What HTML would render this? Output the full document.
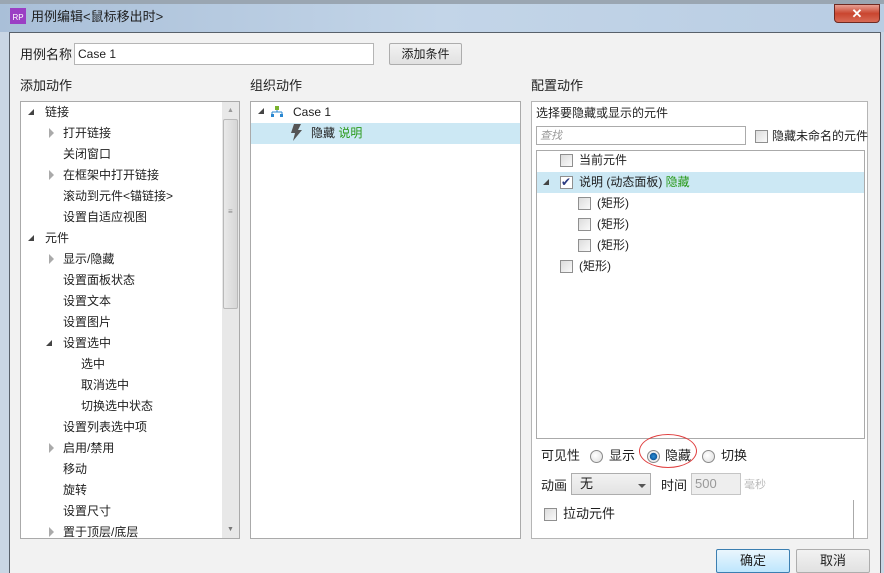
<!DOCTYPE html>
<html><head><meta charset="utf-8"><style>
*{margin:0;padding:0;box-sizing:border-box}
body{width:884px;height:573px;overflow:hidden;background:#c9d6e4;font-family:"Liberation Sans","Noto Sans CJK SC",sans-serif;font-size:12px;color:#1e1e1e;position:relative}
.a{position:absolute;white-space:nowrap;line-height:16px}
.box{position:absolute;background:#fff;border:1px solid #aaa}
.cb{position:absolute;width:13px;height:13px;border:1px solid #8f8f8f;background:linear-gradient(135deg,#dcdcdc,#fafafa)}
.tri{position:absolute;width:0;height:0}
.rad{position:absolute;width:13px;height:13px;border-radius:50%;border:1px solid #8a8a8a;background:radial-gradient(circle at 40% 40%,#fff,#ddd)}
.btn{position:absolute;border:1px solid #adadad;background:linear-gradient(#f2f2f2,#e1e1e1);text-align:center;border-radius:2px}
</style></head><body>
<div class="a" style="left:0;top:0;width:884px;height:32px;background:linear-gradient(90deg,#a9bfd8,#c3d5e8 50%,#b9cde3)"></div>
<div class="a" style="left:0;top:0;width:884px;height:4px;background:#9aa6b2"></div>
<div class="a" style="left:10px;top:8px;width:16px;height:16px;background:#9b3fc4;color:#fff;font-size:8px;line-height:20px;text-align:center">RP</div>
<div class="a" style="left:31px;top:9px;font-size:13px">用例编辑&lt;鼠标移出时&gt;</div>
<div class="a" style="left:834px;top:4px;width:46px;height:19px;border-radius:0 0 4px 4px;background:linear-gradient(#e8a093,#c9452f 50%,#d86a55);border:1px solid #6e2a22;color:#fff;font-weight:bold;text-align:center;font-size:13px;line-height:17px">✕</div>
<div class="a" style="left:9px;top:32px;width:872px;height:541px;background:#f2f2f2;border:1px solid #58616b;border-bottom:none"></div>
<div class="a" style="left:20px;top:47px;font-size:13px">用例名称</div>
<div class="a" style="left:74px;top:43px;width:300px;height:22px;background:#fff;border:1px solid #b5b5b5;padding:2px 3px;font-size:12px">Case 1</div>
<div class="btn" style="left:389px;top:43px;width:73px;height:22px;line-height:20px">添加条件</div>
<div class="a" style="left:20px;top:78px;font-size:13px">添加动作</div>
<div class="a" style="left:250px;top:78px;font-size:13px">组织动作</div>
<div class="a" style="left:531px;top:78px;font-size:13px">配置动作</div>

<div class="box" style="left:20px;top:101px;width:220px;height:438px"></div>
<div class="a" style="left:222px;top:102px;width:17px;height:436px;background:#e8e8e8"></div>
<div class="a" style="left:223px;top:119px;width:15px;height:190px;background:linear-gradient(90deg,#e9e9e9,#d6d6d6);border:1px solid #b9b9b9;border-radius:2px"></div>
<div class="a" style="left:227px;top:103px;color:#999;font-size:7px">▲</div>
<div class="a" style="left:227px;top:522px;color:#777;font-size:7px">▼</div>
<div class="a" style="left:228px;top:204px;color:#888;font-size:8px">≡</div>
<div id="L"></div>

<div class="box" style="left:250px;top:101px;width:271px;height:438px"></div>
<div class="a" style="left:251px;top:123px;width:269px;height:21px;background:#cce8f4"></div>
<div class="tri" style="left:258px;top:108px;border-left:6px solid transparent;border-bottom:6px solid #444"></div>
<svg class="a" style="left:271px;top:106px" width="12" height="12"><rect x="4" y="0" width="4" height="4" fill="#7ab32e"/><path d="M6 4V6M1 6H11M1 6V8M11 6V8" stroke="#2a87d0" fill="none"/><rect x="0" y="8" width="3" height="3" fill="#2a87d0"/><rect x="9" y="8" width="3" height="3" fill="#2a87d0"/></svg>
<div class="a" style="left:293px;top:104px">Case 1</div>
<svg class="a" style="left:290px;top:124px" width="13" height="17"><path d="M4 0H11L8 6H12L3 17L5 9H1Z" fill="#555"/></svg>
<div class="a" style="left:311px;top:125px">隐藏 <span style="color:#2a9a1a">说明</span></div>

<div class="a" style="left:531px;top:101px;width:337px;height:438px;background:#fff;border:1px solid #b5b5b5"></div>
<div class="a" style="left:536px;top:105px">选择要隐藏或显示的元件</div>
<div class="a" style="left:536px;top:126px;width:210px;height:19px;border:1px solid #ababab;background:#fff;padding:1px 3px;color:#999;font-style:italic;font-size:11px">查找</div>
<div class="cb" style="left:755px;top:130px"></div>
<div class="a" style="left:772px;top:128px">隐藏未命名的元件</div>
<div class="box" style="left:536px;top:150px;width:329px;height:289px"></div>
<div class="a" style="left:537px;top:172px;width:327px;height:21px;background:#cce8f4"></div>
<div class="cb" style="left:560px;top:154px"></div><div class="a" style="left:579px;top:152px">当前元件</div>
<div class="tri" style="left:543px;top:179px;border-left:6px solid transparent;border-bottom:6px solid #444"></div>
<div class="cb" style="left:560px;top:176px;background:#fff"></div><div class="a" style="left:561px;top:174px;color:#2b3a80;font-size:12px">✔</div>
<div class="a" style="left:579px;top:174px">说明 (动态面板) <span style="color:#2a9a1a">隐藏</span></div>
<div class="cb" style="left:578px;top:197px"></div><div class="a" style="left:597px;top:195px">(矩形)</div>
<div class="cb" style="left:578px;top:218px"></div><div class="a" style="left:597px;top:216px">(矩形)</div>
<div class="cb" style="left:578px;top:239px"></div><div class="a" style="left:597px;top:237px">(矩形)</div>
<div class="cb" style="left:560px;top:260px"></div><div class="a" style="left:579px;top:258px">(矩形)</div>
<div class="a" style="left:541px;top:448px;font-size:13px">可见性</div>
<div class="rad" style="left:590px;top:450px"></div><div class="a" style="left:609px;top:448px;font-size:13px">显示</div>
<div class="rad" style="left:647px;top:450px;background:radial-gradient(circle,#2a8fd8 0,#125a9c 45%,#eee 50%)"></div><div class="a" style="left:665px;top:448px;font-size:13px">隐藏</div>
<div class="a" style="left:639px;top:434px;width:58px;height:34px;border:1px solid #e04040;border-radius:50%"></div>
<div class="rad" style="left:702px;top:450px"></div><div class="a" style="left:721px;top:448px;font-size:13px">切换</div>
<div class="a" style="left:541px;top:478px;font-size:13px">动画</div>
<div class="a" style="left:571px;top:473px;width:80px;height:22px;border:1px solid #adadad;background:linear-gradient(#f2f2f2,#e3e3e3);padding:2px 8px;font-size:13px">无</div>
<div class="tri" style="left:638px;top:484px;border-left:4px solid transparent;border-right:4px solid transparent;border-top:4px solid #555"></div>
<div class="a" style="left:661px;top:478px;font-size:13px">时间</div>
<div class="a" style="left:691px;top:473px;width:50px;height:22px;border:1px solid #c5c5c5;background:#eee;color:#999;padding:2px 3px;font-size:13px">500</div>
<div class="a" style="left:744px;top:477px;color:#bbb;font-size:11px">毫秒</div>
<div class="a" style="left:853px;top:500px;width:1px;height:39px;background:#aaa"></div>
<div class="cb" style="left:544px;top:508px"></div><div class="a" style="left:563px;top:506px;font-size:13px">拉动元件</div>
<div class="btn" style="left:716px;top:549px;width:74px;height:24px;line-height:22px;font-size:13px;border-color:#3c7fb1;background:linear-gradient(#eaf6fd,#bee6fd)">确定</div>
<div class="btn" style="left:796px;top:549px;width:74px;height:24px;line-height:22px;font-size:13px">取消</div>
<script>
var it=[[1,0,"链接",0],[1,1,"打开链接",0],[0,1,"关闭窗口",0],[1,1,"在框架中打开链接",0],[0,1,"滚动到元件<锚链接>",0],[0,1,"设置自适应视图",0],[1,0,"元件",0],[1,1,"显示/隐藏",0],[0,1,"设置面板状态",0],[0,1,"设置文本",0],[0,1,"设置图片",0],[1,1,"设置选中",1],[0,2,"选中",0],[0,2,"取消选中",0],[0,2,"切换选中状态",0],[0,1,"设置列表选中项",0],[1,1,"启用/禁用",0],[0,1,"移动",0],[0,1,"旋转",0],[0,1,"设置尺寸",0],[1,1,"置于顶层/底层",0]];
var h="";it.forEach(function(r,i){var y=104+i*21;var tx=r[1]==0?45:(r[1]==1?63:81);
if(r[0]){var open=(r[1]==0||r[3]);var ax=r[1]==0?28:46;
if(open)h+='<div class="tri" style="left:'+ax+'px;top:'+(y+5)+'px;border-left:6px solid transparent;border-bottom:6px solid #444"></div>';
else h+='<div class="tri" style="left:'+(ax+3)+'px;top:'+(y+3)+'px;border-top:5px solid transparent;border-bottom:5px solid transparent;border-left:5px solid #aaa"></div>';}
h+='<div class="a" style="left:'+tx+'px;top:'+y+'px">'+r[2].replace("<","&lt;").replace(">","&gt;")+'</div>';});
document.getElementById("L").innerHTML=h;
</script>
</body></html>
